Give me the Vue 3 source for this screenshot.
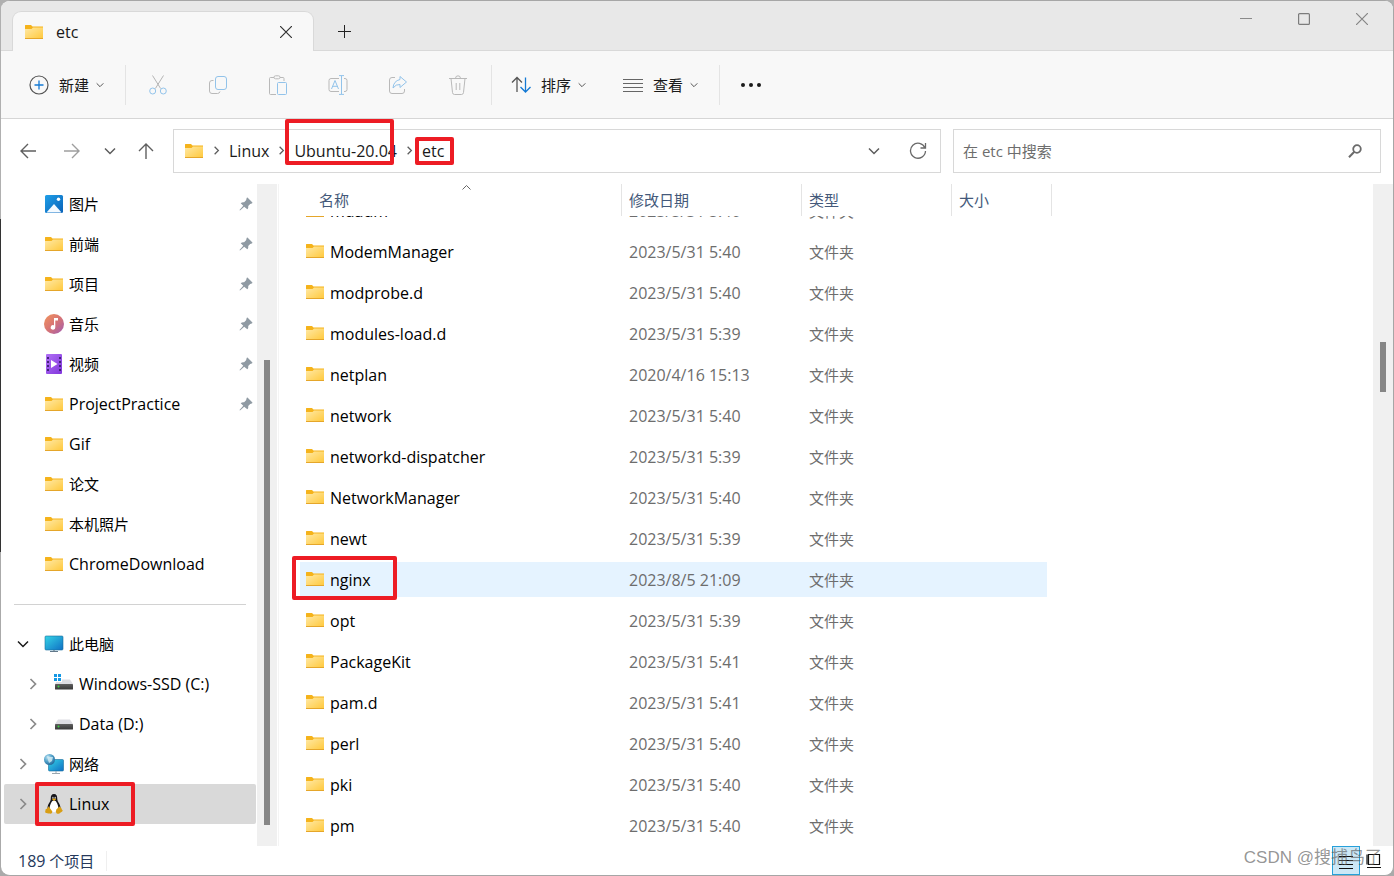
<script setup>
import { onMounted, ref } from 'vue'

const pinned = [
  { name: '图片', icon: 'picture', pin: true },
  { name: '前端', icon: 'folder', pin: true },
  { name: '项目', icon: 'folder', pin: true },
  { name: '音乐', icon: 'music', pin: true },
  { name: '视频', icon: 'video', pin: true },
  { name: 'ProjectPractice', icon: 'folder', pin: true },
  { name: 'Gif', icon: 'folder' },
  { name: '论文', icon: 'folder' },
  { name: '本机照片', icon: 'folder' },
  { name: 'ChromeDownload', icon: 'folder' }
]

const tree = [
  { name: '此电脑', icon: 'computer', open: true },
  { name: 'Windows-SSD (C:)', icon: 'system-drive', child: true },
  { name: 'Data (D:)', icon: 'drive', child: true },
  { name: '网络', icon: 'network' },
  { name: 'Linux', icon: 'tux', selected: true, marked: true }
]

const files = [
  ['mdadm', '2023/5/31 5:40'],
  ['ModemManager', '2023/5/31 5:40'],
  ['modprobe.d', '2023/5/31 5:40'],
  ['modules-load.d', '2023/5/31 5:39'],
  ['netplan', '2020/4/16 15:13'],
  ['network', '2023/5/31 5:40'],
  ['networkd-dispatcher', '2023/5/31 5:39'],
  ['NetworkManager', '2023/5/31 5:40'],
  ['newt', '2023/5/31 5:39'],
  ['nginx', '2023/8/5 21:09'],
  ['opt', '2023/5/31 5:39'],
  ['PackageKit', '2023/5/31 5:41'],
  ['pam.d', '2023/5/31 5:41'],
  ['perl', '2023/5/31 5:40'],
  ['pki', '2023/5/31 5:40'],
  ['pm', '2023/5/31 5:40']
].map(([name, date]) => ({ name, date, active: name === 'nginx' }))

const actions = ['cut', 'copy', 'paste', 'rename', 'share', 'delete']
const actionLabels = { cut: '剪切', copy: '复制', paste: '粘贴', rename: '重命名', share: '共享', delete: '删除' }

const isLatin = (text) => !/[\u4e00-\u9fff]/.test(text)

const list = ref(null)
onMounted(() => {
  list.value.scrollTop = 26
})
</script>

<template>
  <svg class="defs" aria-hidden="true">
    <defs>
      <linearGradient id="g-folder" x1="0" y1="0" x2="1" y2="1">
        <stop offset="0" stop-color="#ffe9a6" />
        <stop offset="1" stop-color="#ffc83a" />
      </linearGradient>
      <linearGradient id="g-blue" x1="0" y1="0" x2="1" y2="1">
        <stop offset="0" stop-color="#1f9fe8" />
        <stop offset="1" stop-color="#0a62b8" />
      </linearGradient>
      <linearGradient id="g-screen" x1="0" y1="0" x2="1" y2="1">
        <stop offset="0" stop-color="#35d4e6" />
        <stop offset="1" stop-color="#0f6fc4" />
      </linearGradient>
      <linearGradient id="g-music" x1="0" y1="0" x2="1" y2="1">
        <stop offset="0" stop-color="#f2945c" />
        <stop offset="0.5" stop-color="#d77474" />
        <stop offset="1" stop-color="#a05cb4" />
      </linearGradient>
      <linearGradient id="g-video" x1="0" y1="0" x2="1" y2="1">
        <stop offset="0" stop-color="#b070f5" />
        <stop offset="1" stop-color="#8236dc" />
      </linearGradient>
      <linearGradient id="g-drive" x1="0" y1="0" x2="0" y2="1">
        <stop offset="0" stop-color="#606060" />
        <stop offset="1" stop-color="#383838" />
      </linearGradient>
      <radialGradient id="g-globe" cx="0.35" cy="0.3" r="0.8">
        <stop offset="0" stop-color="#b9e2f2" />
        <stop offset="0.5" stop-color="#4f9fc8" />
        <stop offset="1" stop-color="#1d5f92" />
      </radialGradient>
      <symbol id="folder" viewBox="0 0 20 20">
        <path d="M1 3.500q0-.5.5-.5H7l1.500 1.500H19v3H1z" fill="#f5b31b" />
        <path d="M1 7h6.500l1.500-1.500H19V17H1z" fill="url(#g-folder)" />
        <path d="M1 16.500h18" stroke="#e5a62a" />
      </symbol>
      <symbol id="picture" viewBox="0 0 20 20">
        <rect x="1" y="1" width="18" height="18" rx="1.500" fill="url(#g-blue)" />
        <path d="M2.500 18.500 10 10l7.500 8.500z" fill="#f4faff" />
        <circle cx="14.500" cy="5.300" r="1.700" fill="#fff" />
      </symbol>
      <symbol id="music" viewBox="0 0 20 20">
        <circle cx="10" cy="10" r="10" fill="url(#g-music)" />
        <path d="M10 4h4v2.500h-2.700v6.700A2.300 2.300 0 1 1 10 11.300z" fill="#fff" />
      </symbol>
      <symbol id="video" viewBox="0 0 20 20">
        <rect x="2" y="0" width="16" height="20" rx="1" fill="url(#g-video)" />
        <path d="M4 3v15M16 3v15" stroke="#44237a" stroke-width="2" stroke-dasharray="2 2" />
        <path d="M7 6v8l6.500-4z" fill="#fff" />
      </symbol>
      <symbol id="computer" viewBox="0 0 20 20">
        <rect x="1" y="2" width="18" height="14" rx="1" fill="url(#g-screen)" stroke="#176d9c" stroke-width=".6" />
        <path d="M9 16h2v1h-2z" fill="#8aa0ad" />
        <path d="M6 17.500h8" stroke="#61788a" />
      </symbol>
      <symbol id="drive" viewBox="0 0 20 20">
        <path d="M4 5.500h12l3 4.500H1z" fill="#dedee3" />
        <rect x="1" y="10" width="18" height="5.500" rx=".6" fill="url(#g-drive)" />
        <circle cx="4.500" cy="12.500" r="1" fill="#38d13e" />
      </symbol>
      <symbol id="system-drive" viewBox="0 0 20 20">
        <path d="M4 5.500h12l3 4.500H1z" fill="#dedee3" />
        <rect x="1" y="10" width="18" height="5.500" rx=".6" fill="url(#g-drive)" />
        <circle cx="4.500" cy="12.500" r="1" fill="#38d13e" />
        <rect x="0" y="0" width="8" height="8" fill="#fff" />
        <path d="M0 0h3v3H0zM4 0h3v3H4zM0 4h3v3H0zM4 4h3v3H4z" fill="#1598e4" />
      </symbol>
      <symbol id="network" viewBox="0 0 20 20">
        <rect x="4.500" y="5.500" width="15" height="11.500" rx="1" fill="url(#g-screen)" stroke="#176d9c" stroke-width=".6" />
        <path d="M12 17v2M8 19.500h8" stroke="#9aa7b0" />
        <circle cx="5.500" cy="5.500" r="5.500" fill="url(#g-globe)" />
        <path d="M3 2l3 1 3 0-1 4-3 2-1-3z" fill="#d5ecf4" opacity=".8" />
      </symbol>
      <symbol id="tux" viewBox="0 0 20 20">
        <path d="M10 0c-2.400 0-3.300 1.800-3.200 4 .1 2.200-.6 3.300-1.800 5.200C3.600 11.500 3.500 13 3.500 14.500L6 18h8l2.500-3.500c0-1.800-.3-3.300-1.500-5.300-1.200-1.900-1.800-3-1.800-5.200C13.200 1.800 12.400 0 10 0z" fill="#15151a" />
        <path d="M10 6.500c-1.500 0-2.500 1.200-3.300 3.300-1 2.500-1.400 3.700-.7 5.700.6 1.500 2 2.700 4 2.700s3.400-1.200 4-2.700c.6-2 .3-3.200-.7-5.700-.8-2.100-1.800-3.300-3.300-3.300z" fill="#fff" />
        <ellipse cx="8.900" cy="3.800" rx=".8" ry="1.100" fill="#bbb" />
        <ellipse cx="11.200" cy="3.800" rx=".8" ry="1.100" fill="#bbb" />
        <path d="M8 5.300 10 4.300l2.200 1L10 7z" fill="#e6a817" />
        <path d="M4.500 12.300 8 17c.8 1.900-.6 3-2.500 2.600-1.500-.4-3-.5-3.900-.9-.9-.5-.1-1.700-.1-2.900 0-1 1.200-.7 1.700-1.200z" fill="#d89e14" />
        <path d="M15.500 12.500 12.300 15.500c-.5 1.900-.5 3.900 1.200 4.300 1.700.3 2.600-1.200 4-1.900 1.100-.5 1.700-1.100.8-1.900-.6-.6-.9-1.200-1-2z" fill="#d89e14" />
      </symbol>
      <symbol id="pin" viewBox="0 0 14 14">
        <path d="M8.700.8 13.200 5.300c.4.500.2 1-.4 1.100l-1.600.5-2 2c.2 1.400 0 2.500-.9 3.400L5.200 9.700 1 13.500l-.5-.5L4.300 8.800 1.700 6.200C2.600 5.300 3.700 5 5.100 5.200l2-2L7.600 1.200c.1-.6.700-.8 1.100-.4z" fill="#8f9aa3" />
      </symbol>
      <symbol id="chevron-down" viewBox="0 0 12 12">
        <path d="M1 3.500 6 8.500l5-5" fill="none" stroke="currentColor" stroke-width="1.500" />
      </symbol>
      <symbol id="chevron-right" viewBox="0 0 12 12">
        <path d="M3.500 1 8.500 6l-5 5" fill="none" stroke="currentColor" stroke-width="1.700" />
      </symbol>
      <g fill="none" stroke-width="1.400">
        <symbol id="cut" viewBox="0 0 20 20">
          <path d="M4.500.5 12.600 13.500M15.500.5 7.400 13.500" stroke="#b4b4b4" />
          <circle cx="4.700" cy="16" r="3" stroke="#92c3ea" />
          <circle cx="15.300" cy="16" r="3" stroke="#92c3ea" />
        </symbol>
        <symbol id="copy" viewBox="0 0 20 20">
          <path d="M5.500 5.500H4Q1.500 5.500 1.500 8v8q0 2.500 2.500 2.500h5.500q2 0 2.500-2" stroke="#b9b9b9" />
          <rect x="7.500" y="1.500" width="11" height="13" rx="2.500" stroke="#92c3ea" />
        </symbol>
        <symbol id="paste" viewBox="0 0 20 20">
          <path d="M6 2.500H2.500q-1 0-1 1v15q0 1 1 1H8M12 2.500h3q1 0 1 1V6" stroke="#b9b9b9" />
          <rect x="6" y=".8" width="6" height="3" rx="1.500" stroke="#b9b9b9" />
          <rect x="9.500" y="7.500" width="9" height="12" rx="1" stroke="#92c3ea" />
        </symbol>
        <symbol id="rename" viewBox="0 0 20 20">
          <path d="M11 3.500H3q-2 0-2 2v9q0 2 2 2h8M16 3.500h1q2 0 2 2v9q0 2-2 2h-1" stroke="#b9b9b9" />
          <path d="M13.500 1v18M11 .6h5M11 19.400h5M3.500 14 7 5.500 10.500 14M4.700 11.300h4.600" stroke="#92c3ea" />
        </symbol>
        <symbol id="share" viewBox="0 0 20 20">
          <path d="M7 2.500H4q-2.500 0-2.500 2.500v11q0 2.500 2.500 2.500h10q2.500 0 2.500-2.500v-2" stroke="#b9b9b9" />
          <path d="M12 1.500 18.500 7 12 12.500V9.500Q8 9 5 13q.5-7 7-8.500z" stroke="#92c3ea" stroke-linejoin="round" />
        </symbol>
        <symbol id="delete" viewBox="0 0 20 20">
          <path d="M1 3.500h18M7.500 3.500q0-2.700 2.500-2.700t2.500 2.700M3 3.500l1.500 14q.2 2 2 2h7q1.800 0 2-2L17 3.500M8.200 8v7M11.800 8v7" stroke="#b9b9b9" />
        </symbol>
      </g>
    </defs>
  </svg>

  <div class="desktop">
    <div class="window">
      <header class="titlebar">
        <div class="tab">
          <svg class="icon"><use href="#folder" /></svg>
          <span class="tab-title latin">etc</span>
          <button class="plain" aria-label="关闭标签页">
            <svg width="12" height="12"><path d="M0 0 12 12M12 0 0 12" stroke="#333" stroke-width="1.200" /></svg>
          </button>
        </div>
        <button class="plain add" aria-label="新建标签页">
          <svg width="13" height="13"><path d="M0 6.500h13M6.500 0v13" stroke="#222" /></svg>
        </button>
        <div class="window-buttons">
          <button class="plain" aria-label="最小化">
            <svg width="12" height="12"><path d="M0 5.500h12" stroke="#8a8a8a" /></svg>
          </button>
          <button class="plain" aria-label="最大化">
            <svg width="12" height="12"><rect x=".6" y=".6" width="10.800" height="10.800" rx="1" fill="none" stroke="#7c7c7c" stroke-width="1.200" /></svg>
          </button>
          <button class="plain" aria-label="关闭">
            <svg width="12" height="12"><path d="M0 0 12 12M12 0 0 12" stroke="#858585" stroke-width="1.200" /></svg>
          </button>
        </div>
      </header>

      <div class="toolbar">
        <button class="plain command new">
          <svg width="20" height="20" fill="none">
            <circle cx="10" cy="10" r="9" stroke="#555" stroke-width="1.200" />
            <path d="M5.500 10h9M10 5.500v9" stroke="#1379d4" stroke-width="1.300" />
          </svg>
          <span>新建</span>
          <svg class="small"><use href="#chevron-down" /></svg>
        </button>
        <i class="rule"></i>
        <div class="actions">
          <button v-for="action in actions" :key="action" class="plain" :aria-label="actionLabels[action]" disabled>
            <svg class="icon" fill="none"><use :href="'#' + action" /></svg>
          </button>
        </div>
        <i class="rule"></i>
        <button class="plain command sort">
          <svg width="20" height="20" fill="none" stroke-width="1.300">
            <path d="M6 17V2.500M1 7.500 6 2.500l5 5" stroke="#555" />
            <path d="M14.500 2.500V17M9.500 12l5 5 5-5" stroke="#1379d4" />
          </svg>
          <span>排序</span>
          <svg class="small"><use href="#chevron-down" /></svg>
        </button>
        <button class="plain command view">
          <svg width="20" height="20"><path d="M0 4.500h20M0 8.500h20M0 12.500h20M0 16.500h20" stroke="#666" /></svg>
          <span>查看</span>
          <svg class="small"><use href="#chevron-down" /></svg>
        </button>
        <i class="rule"></i>
        <button class="plain more" aria-label="查看更多">
          <svg width="20" height="6" fill="#1b1b1b"><circle cx="2" cy="3" r="2" /><circle cx="10" cy="3" r="2" /><circle cx="18" cy="3" r="2" /></svg>
        </button>
      </div>

      <div class="navigation">
        <div class="arrows">
          <button class="plain" aria-label="后退">
            <svg width="16" height="16"><path d="M16 8H1M8 1 1 8l7 7" /></svg>
          </button>
          <button class="plain faded" aria-label="前进">
            <svg width="16" height="16"><path d="M0 8h15M8 1l7 7-7 7" /></svg>
          </button>
          <button class="plain history" aria-label="最近浏览的位置"><svg class="medium"><use href="#chevron-down" /></svg></button>
          <button class="plain up" aria-label="向上">
            <svg width="16" height="16"><path d="M8 16V1M1 8l7-7 7 7" /></svg>
          </button>
        </div>
        <nav class="address latin" aria-label="地址">
          <svg class="icon"><use href="#folder" /></svg>
          <svg class="crumb-arrow"><use href="#chevron-right" /></svg>
          <a href="#linux">Linux</a>
          <svg class="crumb-arrow"><use href="#chevron-right" /></svg>
          <a href="#ubuntu">Ubuntu-20.04<i class="mark mark-distro"></i></a>
          <svg class="crumb-arrow"><use href="#chevron-right" /></svg>
          <a href="#etc">etc<i class="mark mark-etc"></i></a>
          <button class="plain expand" aria-label="以前的位置"><svg class="medium"><use href="#chevron-down" /></svg></button>
          <button class="plain" aria-label="刷新">
            <svg width="18" height="18" fill="none" stroke="#6a6a6a" stroke-width="1.300"><path d="M16 6A7.500 7.500 0 1 0 16.500 9M16.500 1v5h-5" /></svg>
          </button>
        </nav>
        <div class="search">
          <input type="text" aria-label="搜索" placeholder="在 etc 中搜索" />
          <svg width="14" height="14" fill="none" stroke="#6b6b6b"><circle cx="9" cy="5" r="3.800" stroke-width="1.800" /><path d="M6.300 7.800 1 13.300" stroke-width="2" /></svg>
        </div>
      </div>

      <main class="content">
        <aside class="sidebar">
          <a v-for="item in pinned" :key="item.name" href="#" class="place" :class="{ latin: isLatin(item.name) }">
            <i class="arrow"></i>
            <svg class="icon"><use :href="'#' + item.icon" /></svg>
            <span>{{ item.name }}</span>
            <svg v-if="item.pin" class="pin"><use href="#pin" /></svg>
          </a>
          <hr />
          <a
            v-for="item in tree"
            :key="item.name"
            href="#"
            class="place"
            :class="{ latin: isLatin(item.name), child: item.child, selected: item.selected }"
          >
            <i class="arrow" :class="{ open: item.open }">
              <svg class="medium"><use :href="item.open ? '#chevron-down' : '#chevron-right'" /></svg>
            </i>
            <svg class="icon"><use :href="'#' + item.icon" /></svg>
            <span>{{ item.name }}</span>
            <i v-if="item.marked" class="mark mark-linux"></i>
          </a>
        </aside>
        <div class="scroll scroll-side"><i></i></div>

        <section ref="list" class="list">
          <table>
            <colgroup><col class="c-name" /><col class="c-date" /><col class="c-type" /><col class="c-size" /></colgroup>
            <thead>
              <tr>
                <th class="name">
                  名称
                  <svg class="sorted" width="9" height="5"><path d="M.5 4.500l4-4 4 4" fill="none" stroke="#666" /></svg>
                </th>
                <th>修改日期</th>
                <th>类型</th>
                <th>大小</th>
              </tr>
            </thead>
            <tbody>
              <tr v-for="file in files" :key="file.name" :class="{ active: file.active }">
                <td>
                  <div class="cell name latin">
                    <svg class="icon"><use href="#folder" /></svg>{{ file.name }}
                    <i v-if="file.active" class="mark mark-nginx"></i>
                  </div>
                </td>
                <td><div class="cell latin">{{ file.date }}</div></td>
                <td><div class="cell">文件夹</div></td>
                <td><div class="cell last"></div></td>
              </tr>
            </tbody>
          </table>
        </section>
        <div class="scroll scroll-main"><i></i></div>
      </main>

      <footer class="status">
        <span class="count"><span class="latin">189</span> 个项目</span>
        <div class="views">
          <button class="plain details" aria-label="详细信息">
            <svg width="16" height="16"><path d="M1 3.500h14M1 7.500h14M1 11.500h14M1 15.500h14" stroke="#111" /></svg>
          </button>
          <button class="plain" aria-label="大图标">
            <svg width="16" height="16"><path d="M2.500 1.500h11v10h-11zM1 14.500h14M1 1.500v10" fill="none" stroke="#111" stroke-width="1.200" /></svg>
          </button>
        </div>
        <span class="watermark">CSDN @搜捕鸟了</span>
      </footer>
    </div>
  </div>
</template>

<style>
html,
body {
  margin: 0;
  background: #dcdcdc;
}
</style>

<style scoped>
* {
  box-sizing: border-box;
}
.defs {
  position: absolute;
  width: 0;
  height: 0;
}
svg {
  display: block;
  flex: none;
}
.desktop {
  height: 100vh;
  padding-left: 1px;
  background: linear-gradient(#b0b0b0 25%, #333 25%, #333 63%, #aaa 63%);
  font: 15px/20px "Open Sans", "Noto Sans CJK SC", sans-serif;
  color: #1a1a1a;
}
.window {
  display: flex;
  flex-direction: column;
  height: 100%;
  overflow: hidden;
  background: #fff;
  border: solid #a6a6a6;
  border-width: 1px 1px 1px 0;
  border-radius: 9px;
}
.latin {
  font-size: 16px;
}
.plain {
  display: flex;
  align-items: center;
  justify-content: center;
  padding: 0;
  border: 0;
  background: none;
  font: inherit;
  color: inherit;
}
.icon {
  width: 20px;
  height: 20px;
}
.small {
  width: 8px;
  height: 8px;
  color: #555;
}
.medium {
  width: 12px;
  height: 12px;
  color: #5c5c5c;
}
a {
  color: inherit;
  text-decoration: none;
}

.titlebar {
  display: flex;
  flex: none;
  height: 50px;
  background: #e8e8e8;
  border-bottom: 1px solid #d9d9d9;
}
.tab {
  display: flex;
  align-items: center;
  gap: 12px;
  width: 302px;
  height: 40px;
  margin: 10px 0 0 11px;
  padding: 0 21px 0 11px;
  background: #f8f8f8;
  border: 1px solid #d9d9d9;
  border-bottom: 0;
  border-radius: 9px 9px 0 0;
}
.tab-title {
  flex: 1;
}
.add {
  width: 60px;
  margin-top: 12px;
}
.window-buttons {
  display: flex;
  height: 36px;
  margin-right: 2px;
  margin-left: auto;
}
.window-buttons button {
  width: 58px;
}

.toolbar {
  display: flex;
  flex: none;
  align-items: center;
  height: 68px;
  background: #f8f8f8;
  border-bottom: 1px solid #d6d6d6;
}
.command {
  gap: 10px;
}
.command .small {
  margin-left: -3px;
}
.new {
  margin: 0 21px 0 28px;
}
.rule {
  width: 1px;
  height: 40px;
  background: #e4e4e4;
}
.actions {
  display: flex;
  padding: 0 3px 0 2px;
}
.actions button {
  width: 60px;
}
.sort {
  margin: 0 37px 0 19px;
}
.view {
  margin-right: 21px;
}
.more {
  margin-left: 21px;
}

.navigation {
  display: grid;
  grid-template-columns: 141px minmax(0, 768fr) minmax(0, 428fr);
  flex: none;
  align-items: center;
  column-gap: 12px;
  height: 65px;
  padding: 0 12px 2px 19px;
}
.arrows {
  display: flex;
  align-items: center;
}
.arrows svg {
  fill: none;
  stroke: #5f5f5f;
  stroke-width: 1.4;
}
.arrows .medium {
  stroke: none;
}
.arrows .faded {
  margin: 0 24px 0 28px;
  opacity: 0.6;
}
.arrows .up {
  margin-left: 22px;
}
.address,
.search {
  display: flex;
  align-items: center;
  height: 44px;
  border: 1px solid #d8d8d8;
}
.address {
  padding: 0 13px 0 10px;
}
.address a {
  position: relative;
}
.crumb-arrow {
  width: 9px;
  height: 9px;
  margin: 0 8px;
  color: #5f5f5f;
}
.expand {
  margin: 0 29px 0 auto;
}
.search {
  padding: 0 18px 0 9px;
}
.search input {
  flex: 1;
  min-width: 0;
  padding: 0;
  border: 0;
  outline: 0;
  background: none;
  font: inherit;
}
.search input::placeholder {
  color: #6d6d6d;
  opacity: 1;
}

.content {
  display: flex;
  flex: 1;
  min-height: 0;
}
.sidebar {
  flex: none;
  width: 256px;
  padding: 0 1px 0 3px;
  color: #000;
}
.place {
  position: relative;
  display: flex;
  align-items: center;
  gap: 5px;
  height: 40px;
  padding: 0 3px 0 13px;
  border-radius: 2px;
}
.place.selected {
  background: #d9d9d9;
}
.place.child {
  padding-left: 23px;
}
.arrow {
  width: 22px;
}
.arrow .medium {
  color: #8a8a8a;
}
.arrow.open .medium {
  color: #1a1a1a;
}
.pin {
  width: 14px;
  height: 14px;
  margin-left: auto;
}
.sidebar hr {
  height: 1px;
  margin: 20px 10px 19px;
  border: 0;
  background: #d2d2d2;
}
.scroll {
  display: flex;
  flex: none;
  flex-direction: column;
  width: 20px;
  padding-left: 7px;
  background: #f0f0f0;
}
.scroll i {
  width: 6px;
  background: #868686;
}
.scroll-side i {
  height: 465px;
  margin-top: auto;
  margin-bottom: 21px;
}
.scroll-main i {
  height: 50px;
  margin-top: 158px;
}
.list {
  flex: 1;
  min-width: 0;
  margin-left: 1px;
  padding-left: 21px;
  overflow: hidden;
  border-left: 1px solid #f4f4f4;
}
table {
  width: 752px;
  border-collapse: separate;
  border-spacing: 0;
  table-layout: fixed;
}
.c-name {
  width: 322px;
}
.c-date {
  width: 180px;
}
.c-type {
  width: 150px;
}
.c-size {
  width: 100px;
}
th {
  position: sticky;
  top: 0;
  z-index: 1;
  height: 32px;
  padding: 0 0 0 7px;
  background: #fff;
  border-right: 1px solid #e4e4e4;
  font-weight: 400;
  text-align: left;
  color: #44597a;
}
th.name {
  padding-left: 19px;
}
.sorted {
  position: absolute;
  top: 1px;
  left: 162px;
}
td {
  height: 41px;
  padding: 0;
  color: #6d6d6d;
}
.cell {
  position: relative;
  display: flex;
  align-items: center;
  height: 35px;
  padding-left: 7px;
}
.cell.name {
  gap: 5px;
  padding-left: 5px;
  color: #000;
}
.cell .icon {
  margin-bottom: 2px;
}
.cell.last {
  margin-right: 5px;
}
.active .cell {
  background: #e5f3ff;
}

.status {
  position: relative;
  display: flex;
  flex: none;
  align-items: center;
  justify-content: space-between;
  height: 29px;
  padding: 0 5px 0 17px;
}
.count {
  padding-right: 12px;
  border-right: 1px solid #efefef;
  color: #26395c;
}
.views {
  display: flex;
}
.views button {
  width: 28px;
  height: 29px;
}
.views .details {
  background: #cce8f6;
  border: 1px solid #26a0da;
}
.watermark {
  position: absolute;
  right: 11px;
  bottom: 7px;
  font: 17px/20px "Liberation Sans", "Noto Sans CJK SC", sans-serif;
  color: rgba(90, 90, 90, 0.65);
}

.mark {
  position: absolute;
  z-index: 2;
  border: 4px solid #ed1c24;
  border-radius: 2px;
}
.mark-distro {
  inset: -22px 3px -4px -9px;
}
.mark-etc {
  inset: -4px -10px -4px -7px;
}
.mark-nginx {
  top: -6px;
  left: -8px;
  width: 105px;
  height: 44px;
}
.mark-linux {
  top: -2px;
  left: 31px;
  width: 100px;
  height: 44px;
}
</style>
